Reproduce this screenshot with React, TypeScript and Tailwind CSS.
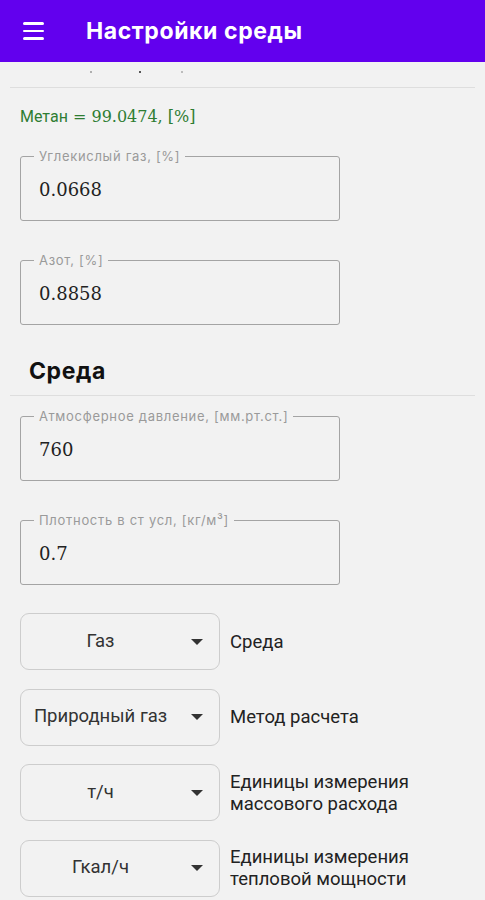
import React from "react";

const sans = { fontFamily: "Inter, 'Open Sans', sans-serif" };

function Field({ label, value }: { label: string; value: string }) {
  return (
    <div className="relative ml-[20px] w-[320px] h-[65px] rounded-[3px] border-[1.5px] border-[#a4a4a4] flex items-center pl-[18px]">
      <span
        className="absolute left-[13px] top-[-9px] px-[5px] bg-[#f2f2f2] text-[13px] leading-[16px] tracking-[0.7px] text-[#9a9a9a]"
        style={sans}
      >
        {label}
      </span>
      <span className="text-[18px] text-[#222] mt-[1px]" style={{ fontFamily: "'DejaVu Serif', serif" }}>
        {value}
      </span>
    </div>
  );
}

function Select({ value, label }: { value: string; label: string[] }) {
  return (
    <div className="flex items-center h-[57px]">
      <div className="ml-[20px] w-[200px] h-[57px] rounded-[9px] border border-[#cdcdcd] flex items-center">
        <span className="flex-1 text-center text-[18.5px] text-[#333] whitespace-nowrap" style={{ fontFamily: "Roboto, sans-serif" }}>
          {value}
        </span>
        <svg width="12" height="6" viewBox="0 0 12 6" className="mr-[16px] ml-[11px] shrink-0">
          <path d="M0 0 L12 0 L6 6 Z" fill="#333" />
        </svg>
      </div>
      <div className="ml-[10px] text-[18.5px] leading-[22px] text-[#222]" style={{ fontFamily: "Roboto, sans-serif" }}>
        {label.map((l, i) => (
          <div key={i}>{l}</div>
        ))}
      </div>
    </div>
  );
}

export default function App() {
  return (
    <div className="w-[485px] h-[900px] bg-[#f2f2f2] overflow-hidden">
      <div className="h-[62px] bg-[#6200ee] flex items-center">
        <div className="ml-[23px] flex flex-col gap-[5px]">
          <div className="w-[21px] h-[2.5px] bg-white rounded-sm" />
          <div className="w-[21px] h-[2.5px] bg-white rounded-sm" />
          <div className="w-[21px] h-[2.5px] bg-white rounded-sm" />
        </div>
        <div className="ml-[42px] text-white text-[23px] font-bold tracking-[0.6px]" style={sans}>
          Настройки среды
        </div>
      </div>
      <div className="h-[25px] relative">
        <div className="absolute left-[90px] top-[9px] w-[2px] h-[2px] rounded-full bg-[#999]" />
        <div className="absolute left-[139px] top-[9px] w-[2px] h-[2px] rounded-full bg-[#222]" />
        <div className="absolute left-[181px] top-[9px] w-[2px] h-[2px] rounded-full bg-[#aaa]" />
      </div>
      <div className="mx-[10px] border-t-[1.5px] border-[#dedede]" />
      <div className="mt-[18px] ml-[20px] text-[16px] leading-[20px] text-[#2e7d32]">
        <span style={{ fontFamily: "Roboto, sans-serif" }}>Метан</span>
        <span style={{ fontFamily: "'DejaVu Serif', serif" }} className="text-[16px]"> = 99.0474, [%]</span>
      </div>
      <div className="mt-[29px]">
        <Field label="Углекислый газ, [%]" value="0.0668" />
      </div>
      <div className="mt-[39px]">
        <Field label="Азот, [%]" value="0.8858" />
      </div>
      <div className="mt-[32px] ml-[29px] text-[23px] leading-[28px] font-bold tracking-[0.6px] text-[#111]" style={sans}>
        Среда
      </div>
      <div className="mt-[10px] mx-[10px] border-t-[1.5px] border-[#dedede]" />
      <div className="mt-[20px]">
        <Field label="Атмосферное давление, [мм.рт.ст.]" value="760" />
      </div>
      <div className="mt-[39px]">
        <Field label="Плотность в ст усл, [кг/м³]" value="0.7" />
      </div>
      <div className="mt-[28px] flex flex-col gap-[18.5px]">
        <Select value="Газ" label={["Среда"]} />
        <Select value="Природный газ" label={["Метод расчета"]} />
        <Select value="т/ч" label={["Единицы измерения", "массового расхода"]} />
        <Select value="Гкал/ч" label={["Единицы измерения", "тепловой мощности"]} />
      </div>
    </div>
  );
}
